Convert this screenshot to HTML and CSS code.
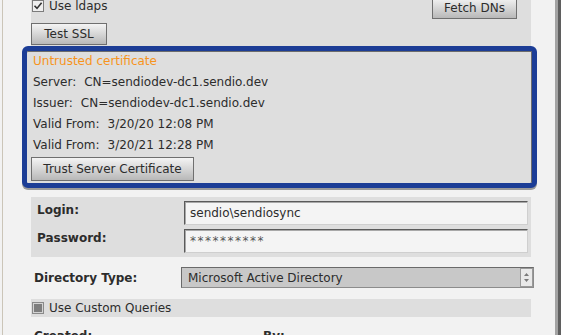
FILE: index.html
```html
<!DOCTYPE html>
<html lang="en">
<head>
  <meta charset="UTF-8" />
  <title>Directory Settings</title>
  <link rel="stylesheet" href="styles.css">
</head>
<body>
  <div class="window">
    <div class="main">
      <section class="panel ssl-row">
        <div class="top-line">
          <label class="check">
            <svg class="box" width="12" height="12" viewBox="0 0 12 12">
              <rect x="0.5" y="0.5" width="11" height="11" fill="#efefef" stroke="#7c7c7c"/>
              <path d="M2.5 5.8 L5 8.4 L9.6 2.8" fill="none" stroke="#333" stroke-width="1.6"/>
            </svg>
            Use ldaps
          </label>
          <button class="btn fetch">Fetch DNs</button>
        </div>
        <button class="btn test">Test SSL</button>
      </section>

      <section class="cert">
        <div class="line warn">Untrusted certificate</div>
        <div class="line"><span class="key">Server:</span>CN=sendiodev-dc1.sendio.dev</div>
        <div class="line"><span class="key">Issuer:</span>CN=sendiodev-dc1.sendio.dev</div>
        <div class="line"><span class="key">Valid From:</span>3/20/20 12:08 PM</div>
        <div class="line"><span class="key">Valid From:</span>3/20/21 12:28 PM</div>
        <button class="btn trust">Trust Server Certificate</button>
      </section>

      <section class="panel creds">
        <div class="field">
          <span class="label">Login:</span>
          <div class="input">sendio\sendiosync</div>
        </div>
        <div class="field">
          <span class="label">Password:</span>
          <div class="input secret">**********</div>
        </div>
      </section>

      <div class="field dir">
        <span class="label">Directory Type:</span>
        <div class="select">
          Microsoft Active Directory
          <svg class="spin" width="13" height="19" viewBox="0 0 13 19">
            <rect x="0.5" y="0.5" width="12" height="18" fill="#e9e9e9" stroke="#9a9a9a"/>
            <path d="M4 8 L6.5 5 L9 8 Z M4 11 L6.5 14 L9 11 Z" fill="#7a7a7a"/>
          </svg>
        </div>
      </div>

      <section class="panel queries">
        <label class="check">
          <svg class="box" width="12" height="12" viewBox="0 0 12 12">
            <rect x="0.5" y="0.5" width="11" height="11" fill="#d4d4d4" stroke="#8a8a8a"/>
            <rect x="2" y="2" width="8" height="8" fill="#7e7e7e"/>
          </svg>
          Use Custom Queries
        </label>
      </section>

      <div class="meta">
        <span class="created">Created:</span>
        <span>By:</span>
      </div>
    </div>
  </div>
</body>
</html>
```

FILE: styles.css
```css
body {
  margin: 0;
  background: #f2f2f2;
  font-family: "DejaVu Sans", Verdana, sans-serif;
  font-size: 12px;
  color: #2c2c2c;
}
.window {
  width: 561px;
  height: 335px;
  overflow: hidden;
  background: linear-gradient(to right, #f2f2f2 2px, #cbc5b8 2px, #cbc5b8 3px, #f2f2f2 3px);
  box-shadow: inset -3px 0 #5f5f5f, inset -6px 0 #a3a3a3;
}
.main {
  width: 515px;
  margin-left: 22px;
  margin-top: -3px;
}
.panel {
  background: #dedede;
  margin: 0 6px 0 9px;
}
.check {
  display: flex;
  align-items: center;
  gap: 5px;
  line-height: 14px;
}
.box {
  display: block;
  flex: none;
}
.btn {
  display: block;
  padding: 0;
  font: inherit;
  color: #2c2c2c;
  background: linear-gradient(#f4f4f4, #b8b8b8);
  border: 1px solid #6f6f6f;
}

/* ldaps row */
.ssl-row {
  height: 49px;
  padding-right: 14px;
}
.top-line {
  display: flex;
  justify-content: space-between;
  align-items: flex-start;
  height: 22px;
}
.top-line .check {
  margin: 2px 0 0 1px;
}
.fetch {
  width: 85px;
  height: 22px;
}
.test {
  width: 76px;
  height: 22px;
  margin-top: 4px;
}

/* certificate box */
.cert {
  border: 5px solid #1c3d96;
  border-radius: 6px;
  background: #dedede;
  padding: 0 0 2px 6px;
  box-shadow: inset 0 1px #6c6c6c, inset -1px 0 #6c6c6c, 0 2px 0 #9a9a9a;
}
.line {
  line-height: 21px;
}
.warn {
  color: #f7941d;
}
.key {
  margin-right: 8px;
}
.trust {
  width: 163px;
  height: 24px;
  margin: 1px 0 0 -2px;
}

/* credentials */
.creds {
  margin-top: 9px;
  padding: 4px 3px;
}
.field {
  display: flex;
  align-items: flex-start;
}
.field + .field {
  margin-top: 4px;
}
.label {
  width: 150px;
  flex: none;
  box-sizing: border-box;
  padding-left: 3px;
  font-weight: bold;
  line-height: 18px;
}
.input {
  flex: 1;
  height: 24px;
  box-sizing: border-box;
  display: flex;
  align-items: center;
  padding-left: 5px;
  background: #f4f4f4;
  border: 1px solid;
  border-color: #5a5a5a #cfcfcf #cfcfcf #5a5a5a;
  box-shadow: inset 1px 1px 0 #a8a8a8;
}
.secret {
  letter-spacing: 1.5px;
  color: #555;
}

/* directory type */
.dir {
  margin: 10px 3px 11px 9px;
  align-items: center;
}
.select {
  flex: 1;
  height: 21px;
  box-sizing: border-box;
  display: flex;
  align-items: center;
  padding-left: 6px;
  background: #c8c8c8;
  border: 1px solid;
  border-color: #6a6a6a #8c8c8c #8c8c8c #6a6a6a;
}
.spin {
  display: block;
  margin-left: auto;
}

/* custom queries */
.queries {
  height: 18px;
  display: flex;
  align-items: center;
  padding-left: 1px;
}

.meta {
  display: flex;
  margin: 10px 0 0 12px;
  font-weight: bold;
  line-height: 18px;
}
.created {
  width: 229px;
}
```
